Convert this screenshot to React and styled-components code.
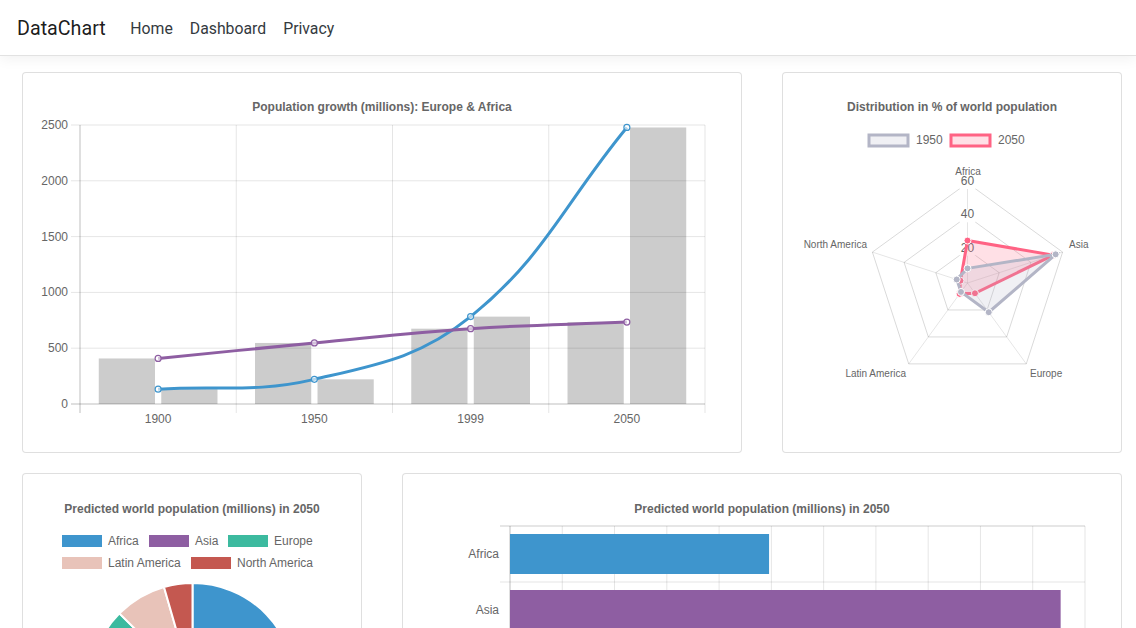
import styled, { createGlobalStyle } from 'styled-components'

const GlobalStyle = createGlobalStyle`
  * { box-sizing: border-box; }
  body {
    margin: 0;
    background: #fff;
    font-family: Roboto, "Noto Sans", sans-serif;
    color: #212529;
  }
`

const Navbar = styled.nav`
  display: flex;
  align-items: center;
  height: 56px;
  padding: 1px 16px 0 17px;
  margin-bottom: 16px;
  background: #fff;
  border-bottom: 1px solid #e2e2e2;
  box-shadow: 0 4px 12px rgba(0, 0, 0, 0.05);
`

const Brand = styled.a`
  font-size: 19.7px;
  color: rgba(0, 0, 0, 0.9);
  margin-right: 16px;
  text-decoration: none;
`

const NavLink = styled.a`
  padding: 0 8.5px;
  font-size: 15.8px;
  color: #343a40;
  text-decoration: none;
`

const Main = styled.main`
  display: grid;
  gap: 20px;
  padding: 0 14px 0 22px;
`

const Row = styled.div`
  display: grid;
  grid-template-columns: ${(p) => p.$cols};
  gap: 40px;
`

const Card = styled.section`
  height: 381px;
  padding: 20px;
  border: 1px solid rgba(0, 0, 0, 0.125);
  border-radius: 4px;
  background: #fff;
`

const Canvas = styled.svg`
  display: block;
  width: 100%;
  height: 100%;
  overflow: visible;
  font-family: "Liberation Sans", Arial, sans-serif;
`

const Title = styled.text`
  font-size: 12px;
  font-weight: bold;
  fill: #666;
  text-anchor: middle;
  dominant-baseline: central;
`

const Label = styled.text`
  font-size: ${(p) => p.$size || 12}px;
  fill: #666;
  text-anchor: ${(p) => p.$anchor || 'start'};
  dominant-baseline: central;
`

const GRID = 'rgba(0,0,0,0.1)'
const AXIS = 'rgba(0,0,0,0.25)'
const COLORS = ['#3e95cd', '#8e5ea2', '#3cba9f', '#e8c3b9', '#c45850']
const REGIONS = ['Africa', 'Asia', 'Europe', 'Latin America', 'North America']
const POP_2050 = [2478, 5267, 734, 784, 433]

// chart.js style bezier through points
const spline = (pts, t = 0.4) => {
  const cps = pts.map((p, i) => {
    const prev = pts[i - 1] || p
    const next = pts[i + 1] || p
    const d01 = Math.hypot(p[0] - prev[0], p[1] - prev[1])
    const d12 = Math.hypot(next[0] - p[0], next[1] - p[1])
    const s01 = d01 / (d01 + d12) || 0
    const s12 = d12 / (d01 + d12) || 0
    const dx = next[0] - prev[0]
    const dy = next[1] - prev[1]
    return {
      prev: [p[0] - t * s01 * dx, p[1] - t * s01 * dy],
      next: [p[0] + t * s12 * dx, p[1] + t * s12 * dy],
    }
  })
  let d = `M${pts[0]}`
  for (let i = 1; i < pts.length; i++) d += ` C${cps[i - 1].next} ${cps[i].prev} ${pts[i]}`
  return d
}

const GrowthChart = () => {
  const years = ['1900', '1950', '1999', '2050']
  const europe = [408, 547, 675, 734]
  const africa = [133, 221, 783, 2478]
  const L = 80, R = 705, T = 125, B = 404
  const yOf = (v) => B - (v * (B - T)) / 2500
  const band = (R - L) / 4
  const cx = (i) => L + band * (i + 0.5)
  const ePts = europe.map((v, i) => [cx(i), yOf(v)])
  const aPts = africa.map((v, i) => [cx(i), yOf(v)])

  return (
    <Canvas viewBox="43 93 678 339">
      <Title x={382} y={107}>Population growth (millions): Europe &amp; Africa</Title>
      {[0, 500, 1000, 1500, 2000, 2500].map((v) => (
        <g key={v}>
          <line x1={71} x2={R} y1={yOf(v)} y2={yOf(v)} stroke={v === 0 ? AXIS : GRID} />
          <Label x={68} y={yOf(v)} $anchor="end">{v}</Label>
        </g>
      ))}
      {[0, 1, 2, 3, 4].map((i) => (
        <line key={i} x1={L + band * i} x2={L + band * i} y1={T} y2={413} stroke={i === 0 ? AXIS : GRID} />
      ))}
      {years.map((y, i) => (
        <Label key={y} x={cx(i)} y={419} $anchor="middle">{y}</Label>
      ))}
      {[europe, africa].map((set, s) =>
        set.map((v, i) => (
          <rect key={`${s}-${i}`} x={L + band * i + band * 0.1 + s * band * 0.4 + band * 0.02}
            y={yOf(v)} width={band * 0.36} height={B - yOf(v)} fill="rgba(0,0,0,0.2)" />
        ))
      )}
      {[[aPts, '#3e95cd'], [ePts, '#8e5ea2']].map(([pts, c]) => (
        <g key={c}>
          <path d={spline(pts)} fill="none" stroke={c} strokeWidth={3} />
          {pts.map((p, i) => (
            <circle key={i} cx={p[0]} cy={p[1]} r={3} fill="#fff" fillOpacity={0.6} stroke={c} strokeWidth={1.2} />
          ))}
        </g>
      ))}
    </Canvas>
  )
}

const RadarChart = () => {
  const cx = 967.5, cy = 283, R = 100
  const ang = (i) => (-90 + i * 72) * (Math.PI / 180)
  const pt = (i, r) => [cx + r * Math.cos(ang(i)), cy + r * Math.sin(ang(i))]
  const ring = (r) => [0, 1, 2, 3, 4].map((i) => pt(i, r).join(',')).join(' ')
  const sets = [
    { data: [25.48, 54.16, 7.61, 8.06, 4.45], color: '255,99,132' },
    { data: [8.77, 55.61, 21.69, 6.62, 6.82], color: '179,181,198' },
  ]
  const labels = [
    { x: 968, y: 171, a: 'middle' },
    { x: 1069, y: 244, a: 'start' },
    { x: 1030, y: 373, a: 'start' },
    { x: 906, y: 373, a: 'end' },
    { x: 867, y: 244, a: 'end' },
  ]

  return (
    <Canvas viewBox="803 93 298 339">
      <Title x={952} y={107}>Distribution in % of world population</Title>
      {[['1950', '179,181,198', 869, 916], ['2050', '255,99,132', 951, 998]].map(([t, c, bx, tx]) => (
        <g key={t}>
          <rect x={bx} y={135} width={39} height={11} fill={`rgba(${c},0.2)`} stroke={`rgb(${c})`} strokeWidth={3} />
          <Label x={tx} y={140}>{t}</Label>
        </g>
      ))}
      {[1, 2, 3].map((k) => (
        <polygon key={k} points={ring((R * k) / 3)} fill="none" stroke="rgba(0,0,0,0.15)" />
      ))}
      {[0, 1, 2, 3, 4].map((i) => (
        <line key={i} x1={cx} y1={cy} x2={pt(i, R)[0]} y2={pt(i, R)[1]} stroke={GRID} />
      ))}
      {REGIONS.map((r, i) => (
        <Label key={r} x={labels[i].x} y={labels[i].y} $anchor={labels[i].a} $size={10}>{r}</Label>
      ))}
      {[20, 40, 60].map((v) => (
        <g key={v}>
          <rect x={cx - 8} y={cy - (v / 60) * R - 7} width={16} height={13} fill="#fff" />
          <Label x={cx} y={cy - (v / 60) * R - 2} $anchor="middle">{v}</Label>
        </g>
      ))}
      {sets.map(({ data, color }) => {
        const pts = data.map((v, i) => pt(i, (v / 60) * R))
        return (
          <g key={color}>
            <polygon points={pts.map((p) => p.join(',')).join(' ')} fill={`rgba(${color},0.2)`}
              stroke={`rgb(${color})`} strokeWidth={3} strokeLinejoin="miter" />
            {pts.map((p, i) => (
              <circle key={i} cx={p[0]} cy={p[1]} r={3.5} fill={`rgb(${color})`} stroke="#fff" strokeWidth={1} />
            ))}
          </g>
        )
      })}
    </Canvas>
  )
}

const arc = (cx, cy, r, a0, a1) => {
  const p = (a) => [cx + r * Math.sin(a), cy - r * Math.cos(a)]
  const [x0, y0] = p(a0)
  const [x1, y1] = p(a1)
  return `M${cx},${cy} L${x0},${y0} A${r},${r} 0 ${a1 - a0 > Math.PI ? 1 : 0} 1 ${x1},${y1} Z`
}

const PieChart = () => {
  const total = POP_2050.reduce((a, b) => a + b, 0)
  let acc = 0
  const slices = POP_2050.map((v) => {
    const a0 = (acc / total) * Math.PI * 2
    acc += v
    return [a0, (acc / total) * Math.PI * 2]
  })
  const legend = [
    { box: 62, text: 108, y: 541 },
    { box: 149, text: 195, y: 541 },
    { box: 228, text: 274, y: 541 },
    { box: 62, text: 108, y: 563 },
    { box: 191, text: 237, y: 563 },
  ]

  return (
    <Canvas viewBox="43 494 298 339">
      <Title x={192} y={509}>Predicted world population (millions) in 2050</Title>
      {legend.map((l, i) => (
        <g key={i}>
          <rect x={l.box} y={l.y - 6} width={40} height={12} fill={COLORS[i]} />
          <Label x={l.text} y={l.y}>{REGIONS[i]}</Label>
        </g>
      ))}
      {slices.map(([a0, a1], i) => (
        <path key={i} d={arc(192.5, 686, 103, a0, a1)} fill={COLORS[i]} stroke="#fff" strokeWidth={2} />
      ))}
    </Canvas>
  )
}

const BarChart = () => {
  const L = 510, R = 1085, T = 526, band = 56
  const step = (R - L) / 11
  const xOf = (v) => L + (v / 5500) * (R - L)

  return (
    <Canvas viewBox="423 494 678 339">
      <Title x={762} y={509}>Predicted world population (millions) in 2050</Title>
      {Array.from({ length: 12 }, (_, k) => (
        <line key={k} x1={L + step * k} x2={L + step * k} y1={T} y2={T + band * 5}
          stroke={k === 0 ? AXIS : GRID} />
      ))}
      {[0, 1, 2, 3, 4, 5].map((k) => (
        <line key={k} x1={500} x2={R} y1={T + band * k} y2={T + band * k} stroke={k === 0 ? 'rgba(0,0,0,0.2)' : GRID} />
      ))}
      {POP_2050.map((v, i) => (
        <g key={i}>
          <rect x={L} y={T + band * i + 8} width={xOf(v) - L} height={40} fill={COLORS[i]} />
          <Label x={499} y={T + band * i + band / 2} $anchor="end">{REGIONS[i]}</Label>
        </g>
      ))}
    </Canvas>
  )
}

const App = () => (
  <>
    <GlobalStyle />
    <Navbar>
      <Brand href="#">DataChart</Brand>
      <NavLink href="#">Home</NavLink>
      <NavLink href="#">Dashboard</NavLink>
      <NavLink href="#">Privacy</NavLink>
    </Navbar>
    <Main>
      <Row $cols="720px 340px">
        <Card><GrowthChart /></Card>
        <Card><RadarChart /></Card>
      </Row>
      <Row $cols="340px 720px">
        <Card><PieChart /></Card>
        <Card><BarChart /></Card>
      </Row>
    </Main>
  </>
)

export default App
